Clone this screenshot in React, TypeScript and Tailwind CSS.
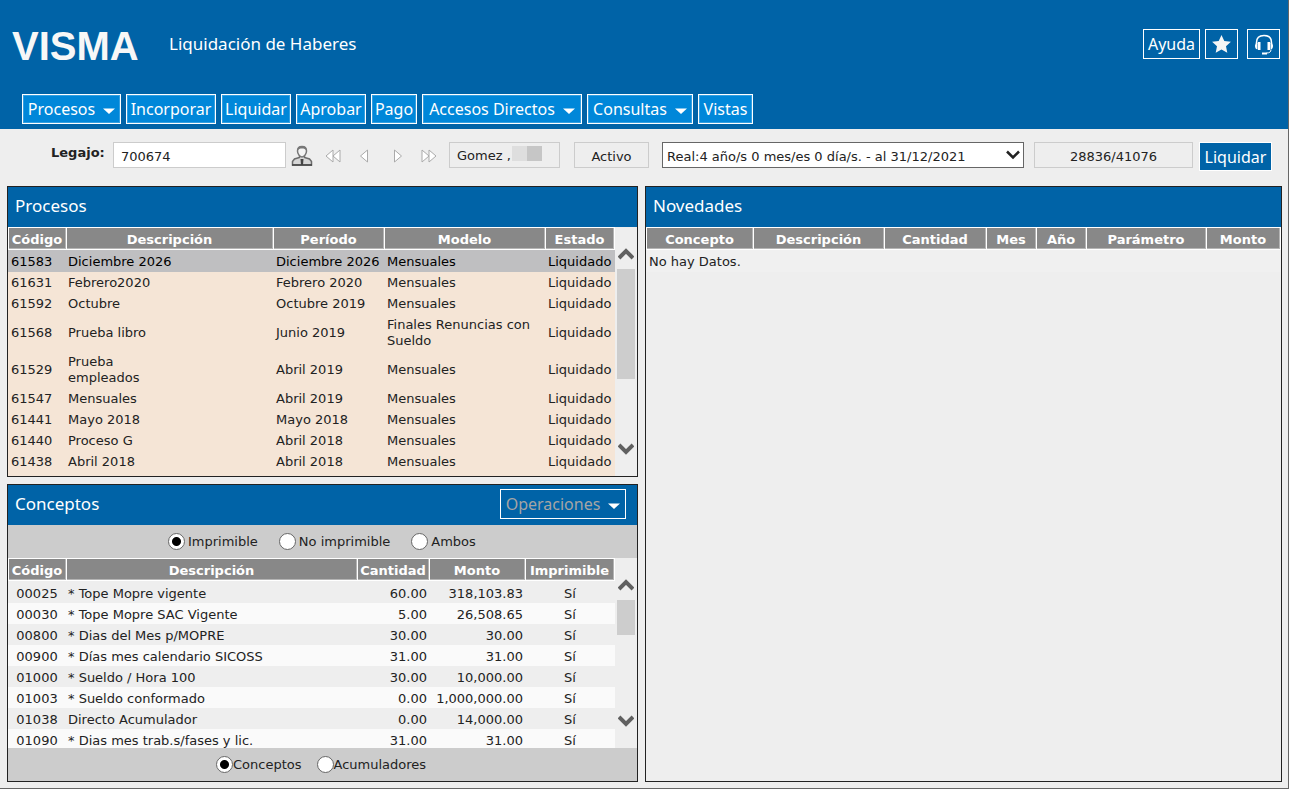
import React from 'react'

const menu = [
  { label: 'Procesos', width: 'w-[99px]', dropdown: true },
  { label: 'Incorporar', width: 'w-[90px]' },
  { label: 'Liquidar', width: 'w-[70px]' },
  { label: 'Aprobar', width: 'w-[70px]' },
  { label: 'Pago', width: 'w-[46px]' },
  { label: 'Accesos Directos', width: 'w-[160px]', dropdown: true },
  { label: 'Consultas', width: 'w-[106px]', dropdown: true },
  { label: 'Vistas', width: 'w-[55px]' },
]

const procesos = [
  ['61583', 'Diciembre 2026', 'Diciembre 2026', 'Mensuales'],
  ['61631', 'Febrero2020', 'Febrero 2020', 'Mensuales'],
  ['61592', 'Octubre', 'Octubre 2019', 'Mensuales'],
  ['61568', 'Prueba libro', 'Junio 2019', 'Finales Renuncias con\nSueldo'],
  ['61529', 'Prueba\nempleados', 'Abril 2019', 'Mensuales'],
  ['61547', 'Mensuales', 'Abril 2019', 'Mensuales'],
  ['61441', 'Mayo 2018', 'Mayo 2018', 'Mensuales'],
  ['61440', 'Proceso G', 'Abril 2018', 'Mensuales'],
  ['61438', 'Abril 2018', 'Abril 2018', 'Mensuales'],
]

const conceptos = [
  ['00025', '* Tope Mopre vigente', '60.00', '318,103.83'],
  ['00030', '* Tope Mopre SAC Vigente', '5.00', '26,508.65'],
  ['00800', '* Dias del Mes p/MOPRE', '30.00', '30.00'],
  ['00900', '* Días mes calendario SICOSS', '31.00', '31.00'],
  ['01000', '* Sueldo / Hora 100', '30.00', '10,000.00'],
  ['01003', '* Sueldo conformado', '0.00', '1,000,000.00'],
  ['01038', 'Directo Acumulador', '0.00', '14,000.00'],
  ['01090', '* Dias mes trab.s/fases y lic.', '31.00', '31.00'],
]

const Caret = () => (
  <svg width="12" height="6" viewBox="0 0 12 6" className="mt-1 shrink-0">
    <path d="M0 0.5h12L6 6z" fill="#fff" />
  </svg>
)

const PersonIcon = () => (
  <svg width="22" height="22" viewBox="0 0 22 22">
    <path
      d="M1.5 20v-3.500l2-2.500 5-1.500v-1.500h5v1.500l5 1.500 2 2.500V20z"
      fill="#d6d6d6"
      stroke="#6b6b6b"
      strokeWidth="1.500"
    />
    <path d="M6.500 6C6.500 3.500 8 1.500 11 1.500S15.500 3.500 15.500 6 13.500 12 11 12 6.500 8.500 6.500 6z" fill="#f4f4f4" stroke="#777" strokeWidth="1.500" />
    <path d="M6.500 6C6 2.500 8.500 1 11 1s5 1.500 4.500 5c-1-2-2.500-2.500-4.500-2.500S7.500 4 6.500 6z" fill="#777" />
    <path d="M9.500 14h3l-.5 6h-2z" fill="#444" />
    <path d="M1 20h20" stroke="#444" strokeWidth="1.500" />
  </svg>
)

const StarIcon = () => (
  <svg width="19" height="18" viewBox="0 0 19 18">
    <path d="M9.500 0l2.800 5.900 6.600.8-4.900 4.500 1.300 6.500-5.800-3.200-5.800 3.200L5 11.200.1 6.700l6.600-.8z" fill="#f5f5f5" />
  </svg>
)

const HeadsetIcon = () => (
  <svg width="20" height="21" viewBox="0 0 20 21" fill="none">
    <path d="M2.500 10V8.500C2.500 4 5.500 1.500 10 1.500s7.500 2.500 7.500 7V10" stroke="#fff" strokeWidth="1.500" />
    <path d="M3.500 8.500C1.500 9 1 10.500 1 12s.5 3 2.500 3.500zM16.500 8.500c2 .5 2.500 2 2.500 3.500s-.5 3-2.500 3.500z" fill="#fff" />
    <path d="M4 8h2.500v8H4zM13.500 8H16v8h-2.500z" fill="#fff" />
    <path d="M17 15.500c0 2.500-1.500 3.500-4.500 3.500" stroke="#fff" />
    <path d="M8 19.500h5" stroke="#fff" strokeWidth="2" />
  </svg>
)

const navPaths = [
  { label: 'Primero', d: 'M8 2v12L1 8zM15 2v12L8 8z' },
  { label: 'Anterior', d: 'M10.500 2v12L3.500 8z' },
  { label: 'Siguiente', d: 'M5.500 2v12l7-6z' },
  { label: 'Último', d: 'M1 2v12l7-6zM8 2v12l7-6z' },
]

const Panel = ({ title, action, children }: { title: string; action?: React.ReactNode; children: React.ReactNode }) => (
  <section className="flex min-w-0 flex-col border border-[#222]">
    <div className="flex h-10 items-center justify-between bg-[#0063a7] pr-[11px] pb-[3px] pl-[7px]">
      <h2 className="font-['Noto_Sans',sans-serif] text-[17px] leading-6 text-white">{title}</h2>
      {action}
    </div>
    {children}
  </section>
)

const Head = ({ columns }: { columns: string[] }) => (
  <thead>
    <tr className="h-[23px]">
      {columns.map((c) => (
        <th
          key={c}
          className="border-y border-r border-white bg-[#888] pt-[2px] pr-[1px] pb-0 pl-0 text-center font-bold text-white shadow-[inset_-1px_-1px_0_#b4b4b4] first:border-l"
        >
          {c}
        </th>
      ))}
    </tr>
  </thead>
)

const ScrollArrow = ({ label, d }: { label: string; d: string }) => (
  <button type="button" aria-label={label} className="flex h-5 items-center justify-center">
    <svg width="16" height="12" viewBox="0 0 16 12" fill="none">
      <path d={d} stroke="#606060" strokeWidth="4" />
    </svg>
  </button>
)

const ScrollBar = ({ thumb }: { thumb: string }) => (
  <div className="flex w-[22px] shrink-0 flex-col px-[2px] py-[17px]">
    <ScrollArrow label="Subir" d="M1 10l7-7 7 7" />
    <div className="flex-1 pt-[5px]">
      <div className={`bg-[#cdcdcd] ${thumb}`} />
    </div>
    <ScrollArrow label="Bajar" d="M1 2l7 7 7-7" />
  </div>
)

const Radio = ({ name, label, checked, gap }: { name: string; label: string; checked?: boolean; gap?: string }) => (
  <label className={`flex items-center ${gap ?? ''}`}>
    <input
      type="radio"
      name={name}
      defaultChecked={checked}
      className="size-[17px] appearance-none rounded-full border border-[#666] bg-white checked:bg-[radial-gradient(circle,#000_4px,#fff_5px)]"
    />
    {label}
  </label>
)

const App = () => (
  <div className="flex min-h-screen flex-col border-r border-b border-[#666] bg-[#eee] font-['DejaVu_Sans',sans-serif] text-[13px] leading-4 text-[#222]">
    <header className="bg-[#0063a7] font-['Noto_Sans',sans-serif] text-base text-white">
      <div className="flex h-[94px] items-start pr-2 pl-3">
        <div className="mt-[18px] w-[126px] font-['Liberation_Sans',sans-serif] text-[40px] leading-14 font-bold text-[#f7f7f7]">
          VISMA
        </div>
        <h1 className="mt-8 ml-[31px] text-[17px] leading-6">Liquidación de Haberes</h1>
        <div className="mt-[29px] ml-auto flex">
          <button type="button" className="h-[30px] w-[57px] border border-white">Ayuda</button>
          <button type="button" aria-label="Favoritos" className="ml-[5px] flex h-[30px] w-[33px] items-center justify-center border border-white">
            <StarIcon />
          </button>
          <button type="button" aria-label="Soporte" className="ml-[9px] flex h-[30px] w-[33px] items-center justify-center border border-white">
            <HeadsetIcon />
          </button>
        </div>
      </div>
      <nav className="flex gap-[5px] pb-[5px] pl-[22px]">
        {menu.map((m) => (
          <button
            key={m.label}
            type="button"
            className={`flex h-[30px] items-center justify-center border border-white bg-[#0087d9] whitespace-nowrap shadow-[inset_0_0_0_1px_#339fe1] ${m.dropdown ? 'gap-2' : ''} ${m.width}`}
          >
            {m.label}
            {m.dropdown && <Caret />}
          </button>
        ))}
      </nav>
    </header>

    <div className="flex h-[57px] items-start pt-[13px] pr-4 pl-[51px]">
      <label htmlFor="legajo" className="mt-[3px] w-[62px] font-bold">Legajo:</label>
      <input id="legajo" defaultValue="700674" className="h-[26px] w-[173px] border border-[#ccc] bg-white px-[7px] pt-[2px]" />
      <div className="flex w-[163px]">
        <button type="button" aria-label="Buscar empleado" className="flex h-7 flex-1 items-center justify-center">
          <PersonIcon />
        </button>
        {navPaths.map((n) => (
          <button key={n.label} type="button" aria-label={n.label} className="flex h-7 w-8 items-center justify-center">
            <svg width="16" height="16" viewBox="0 0 16 16">
              <path d={n.d} fill="#fff" stroke="#aaa" />
            </svg>
          </button>
        ))}
        <span className="w-1" />
      </div>
      <div className="flex h-[26px] w-[111px] border border-[#ccc] pl-[7px]">
        <input readOnly aria-label="Empleado" value="Gomez ," className="w-[55px] pt-[2px]" />
        <span className="mt-[3px] size-[15px] bg-[#dedede]" />
        <span className="mt-[3px] size-[15px] bg-[#c6c6c6]" />
      </div>
      <input readOnly aria-label="Estado" value="Activo" className="ml-[14px] h-[26px] w-[75px] border border-[#ccc] pt-[2px] text-center" />
      <div className="relative ml-[13px] min-w-0 flex-1">
        <select aria-label="Fase" className="block h-[26px] w-full appearance-none border border-[#666] bg-white pt-[3px] pr-6 pl-1">
          <option>Real:4 año/s 0 mes/es 0 día/s. - al 31/12/2021</option>
        </select>
        <svg width="14" height="10" viewBox="0 0 14 10" fill="none" className="pointer-events-none absolute top-2 right-1">
          <path d="M1 1.500l6 6 6-6" stroke="#222" strokeWidth="2.500" />
        </svg>
      </div>
      <input readOnly aria-label="Posición" value="28836/41076" className="ml-[10px] h-[26px] w-[159px] border border-[#ccc] pt-[2px] text-center" />
      <button type="button" className="ml-[6px] h-[29px] w-[73px] border border-white bg-[#0063a7] font-['Noto_Sans',sans-serif] text-base text-white">
        Liquidar
      </button>
    </div>

    <main className="grid flex-1 grid-cols-[631fr_637fr] gap-[7px] pr-[6px] pb-[6px] pl-[7px]">
      <div className="flex min-w-0 flex-col gap-[7px]">
        <Panel title="Procesos">
          <div className="flex h-[249px] overflow-hidden">
            <div className="min-w-0 flex-1 bg-[#f5e5d6]">
              <table className="w-full table-fixed border-separate border-spacing-0">
                <colgroup>
                  <col className="w-[59px]" />
                  <col />
                  <col className="w-[111px]" />
                  <col className="w-[161px]" />
                  <col className="w-[69px]" />
                </colgroup>
                <Head columns={['Código', 'Descripción', 'Período', 'Modelo', 'Estado']} />
                <tbody>
                  {procesos.map(([codigo, descripcion, periodo, modelo]) => (
                    <tr key={codigo} className="h-[21px] first:h-[22px] first:bg-[#bfbfc1] first:text-black">
                      <td className="px-[3px] pt-[3px] pb-[2px]">{codigo}</td>
                      <td className="px-[1px] pt-[3px] pb-[2px] whitespace-pre-line">{descripcion}</td>
                      <td className="px-[2px] pt-[3px] pb-[2px] whitespace-nowrap">{periodo}</td>
                      <td className="px-[2px] pt-[3px] pb-[2px] whitespace-pre-line">{modelo}</td>
                      <td className="px-[2px] pt-[3px] pb-[2px]">Liquidado</td>
                    </tr>
                  ))}
                </tbody>
              </table>
            </div>
            <ScrollBar thumb="h-[110px]" />
          </div>
        </Panel>

        <Panel
          title="Conceptos"
          action={
            <button
              type="button"
              disabled
              className="flex h-[30px] w-[126px] items-center justify-center gap-2 border border-white font-['Noto_Sans',sans-serif] text-base text-[#a5a5a5]"
            >
              Operaciones
              <Caret />
            </button>
          }
        >
          <div className="flex h-[33px] items-center gap-[21px] bg-[#ccc] pl-[160px]">
            <Radio name="filtro" label="Imprimible" checked gap="gap-[3px]" />
            <Radio name="filtro" label="No imprimible" gap="gap-[3px]" />
            <Radio name="filtro" label="Ambos" gap="gap-[3px]" />
          </div>
          <div className="flex h-[190px] overflow-hidden">
            <div className="min-w-0 flex-1">
              <table className="w-full table-fixed border-separate border-spacing-0">
                <colgroup>
                  <col className="w-[59px]" />
                  <col />
                  <col className="w-[72px]" />
                  <col className="w-[96px]" />
                  <col className="w-[89px]" />
                </colgroup>
                <Head columns={['Código', 'Descripción', 'Cantidad', 'Monto', 'Imprimible']} />
                <tbody>
                  {conceptos.map(([codigo, descripcion, cantidad, monto]) => (
                    <tr key={codigo} className="h-[21px] first:h-[22px] even:bg-[#fafafa]">
                      <td className="pt-[4px] pr-[1px] pb-[1px] pl-0 text-center">{codigo}</td>
                      <td className="px-[1px] pt-[4px] pb-[1px]">{descripcion}</td>
                      <td className="px-[3px] pt-[4px] pb-[1px] text-right">{cantidad}</td>
                      <td className="px-[3px] pt-[4px] pb-[1px] text-right">{monto}</td>
                      <td className="pt-[4px] pr-[1px] pb-[1px] pl-0 text-center">Sí</td>
                    </tr>
                  ))}
                </tbody>
              </table>
            </div>
            <ScrollBar thumb="h-[35px]" />
          </div>
          <div className="flex h-[33px] items-center gap-[15px] bg-[#ccc] pl-[208px]">
            <Radio name="vista" label="Conceptos" checked />
            <Radio name="vista" label="Acumuladores" />
          </div>
        </Panel>
      </div>

      <Panel title="Novedades">
        <table className="w-full table-fixed border-separate border-spacing-0">
          <colgroup>
            <col className="w-[108px]" />
            <col />
            <col className="w-[102px]" />
            <col className="w-[50px]" />
            <col className="w-[50px]" />
            <col className="w-[120px]" />
            <col className="w-[74px]" />
          </colgroup>
          <Head columns={['Concepto', 'Descripción', 'Cantidad', 'Mes', 'Año', 'Parámetro', 'Monto']} />
          <tbody>
            <tr className="h-[22px] bg-[#f0f0f0]">
              <td colSpan={7} className="px-[3px] pt-[3px] pb-[2px]">No hay Datos.</td>
            </tr>
          </tbody>
        </table>
      </Panel>
    </main>
  </div>
)

export default App
